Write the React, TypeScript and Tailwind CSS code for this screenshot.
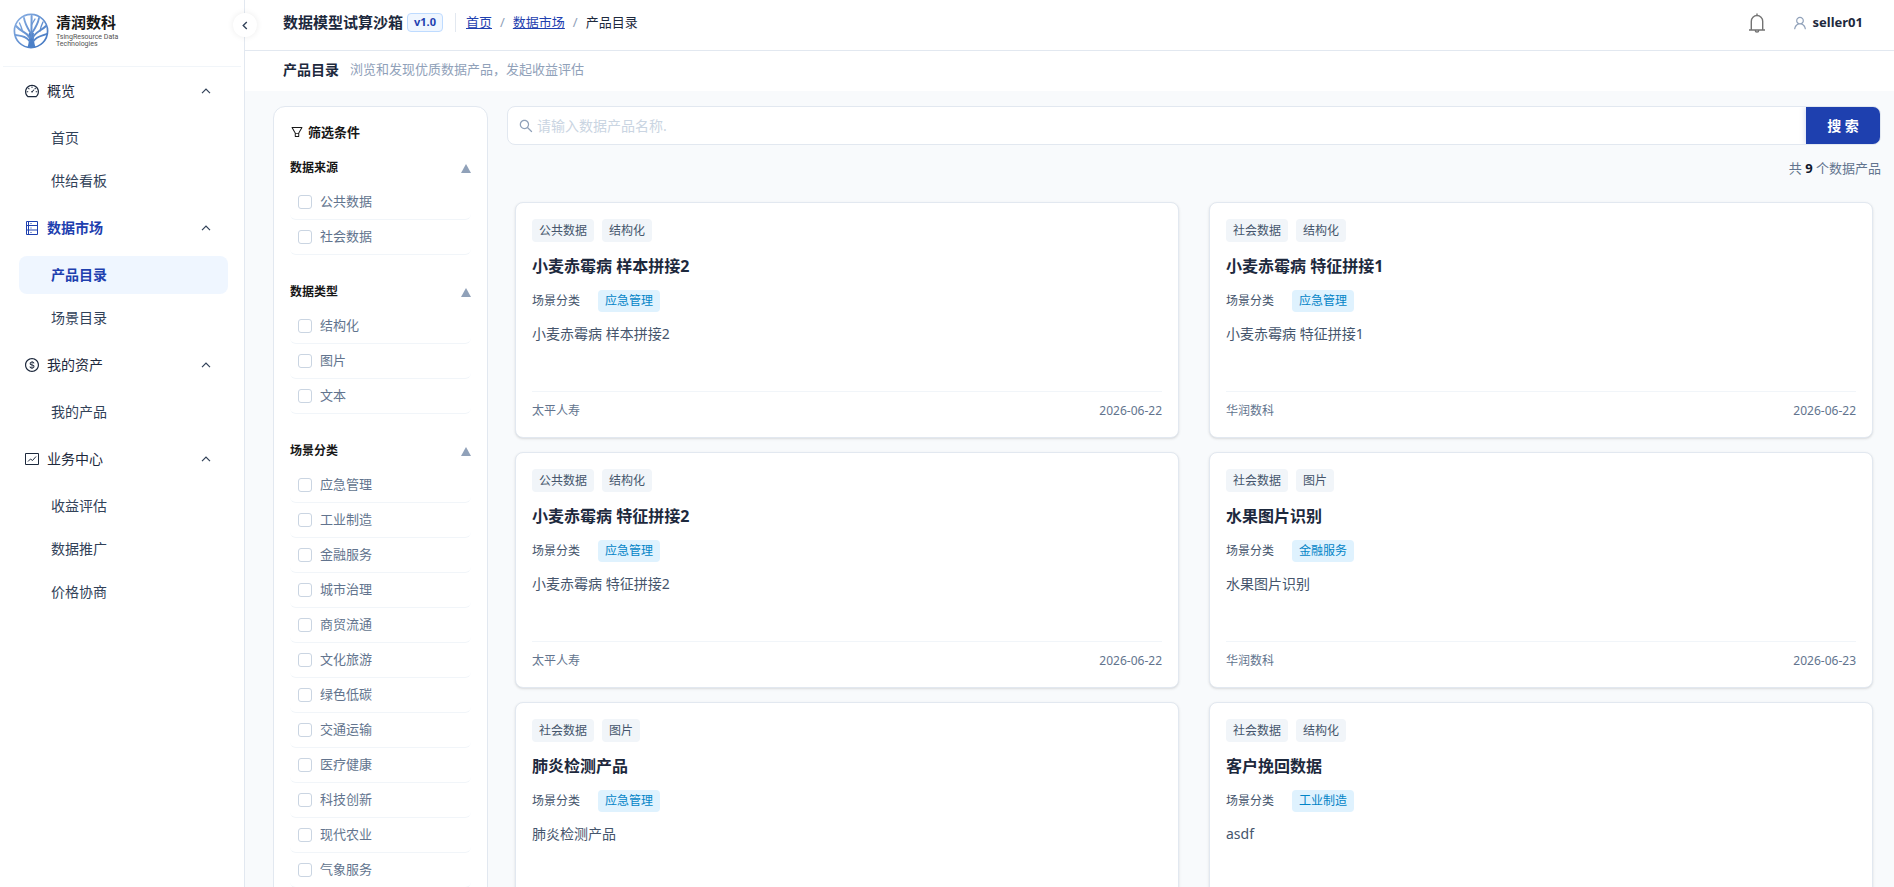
import { useState } from "react";
import {
  AiOutlineDashboard,
  AiOutlineDollar,
  AiOutlineFilter,
  AiOutlineSearch,
  AiOutlineUser,
} from "react-icons/ai";

const menuGroups = [
  { key: "overview", label: "概览", icon: "gauge", items: ["首页", "供给看板"] },
  { key: "market", label: "数据市场", icon: "book", items: ["产品目录", "场景目录"] },
  { key: "assets", label: "我的资产", icon: "dollar", items: ["我的产品"] },
  { key: "business", label: "业务中心", icon: "trend", items: ["收益评估", "数据推广", "价格协商"] },
];

const filterSections = [
  { title: "数据来源", options: ["公共数据", "社会数据"] },
  { title: "数据类型", options: ["结构化", "图片", "文本"] },
  {
    title: "场景分类",
    options: [
      "应急管理",
      "工业制造",
      "金融服务",
      "城市治理",
      "商贸流通",
      "文化旅游",
      "绿色低碳",
      "交通运输",
      "医疗健康",
      "科技创新",
      "现代农业",
      "气象服务",
    ],
  },
];

const products = [
  { tags: ["公共数据", "结构化"], title: "小麦赤霉病 样本拼接2", scene: "应急管理", desc: "小麦赤霉病 样本拼接2", owner: "太平人寿", date: "2026-06-22" },
  { tags: ["社会数据", "结构化"], title: "小麦赤霉病 特征拼接1", scene: "应急管理", desc: "小麦赤霉病 特征拼接1", owner: "华润数科", date: "2026-06-22" },
  { tags: ["公共数据", "结构化"], title: "小麦赤霉病 特征拼接2", scene: "应急管理", desc: "小麦赤霉病 特征拼接2", owner: "太平人寿", date: "2026-06-22" },
  { tags: ["社会数据", "图片"], title: "水果图片识别", scene: "金融服务", desc: "水果图片识别", owner: "华润数科", date: "2026-06-23" },
  { tags: ["社会数据", "图片"], title: "肺炎检测产品", scene: "应急管理", desc: "肺炎检测产品", owner: "太平人寿", date: "2026-06-22" },
  { tags: ["社会数据", "结构化"], title: "客户挽回数据", scene: "工业制造", desc: "asdf", owner: "华润数科", date: "2026-06-22" },
];

const TreeLogo = () => (
  <svg viewBox="0 0 36 36" className="size-9 shrink-0" fill="none" strokeLinecap="round">
    <defs>
      <linearGradient id="tree" x1="0" y1="0" x2="36" y2="36" gradientUnits="userSpaceOnUse">
        <stop offset="0" stopColor="#8fb4e6" />
        <stop offset="1" stopColor="#3a70bd" />
      </linearGradient>
    </defs>
    <circle cx="18" cy="18" r="16.6" stroke="url(#tree)" strokeWidth="1.7" />
    <path d="M15.800 20c.7 5 .2 9.500-1.300 14.500h8C21 29.500 20.400 25 20.900 20z" fill="#4c80c8" />
    <g stroke="url(#tree)">
      <path d="M18.400 24L18.600 3" strokeWidth="2" />
      <path d="M17 25C14 19 8 19 3 13M19.700 25C22 19 28 18 33 13" strokeWidth="2" />
      <path d="M17.500 20C14 14 12 11 11 5M19 20C23 14 25 11 26 5" strokeWidth="1.800" />
      <path d="M16.500 28C13 23 8 23 2.500 22M20.500 28C24 23 29 23 33.500 21" strokeWidth="1.800" />
      <path d="M9.500 18.500C9 16 8 13 6.500 10M27 18C27.500 15 28.500 12 30 9M18.400 12L22 6" strokeWidth="1.400" />
    </g>
  </svg>
);

const BookIcon = () => (
  <svg viewBox="0 0 16 16" className="size-4" fill="none" stroke="currentColor">
    <path d="M2.500 1.500h11v13h-11zM2.500 5.500h11M2.500 10h11M4.500 1.500v13M6.500 3.500h1M6.500 8h1M6.500 12.500h1" />
  </svg>
);

const TrendIcon = () => (
  <svg viewBox="0 0 16 16" className="size-4" fill="none" stroke="currentColor">
    <path d="M1.500 2.500h13v11h-13z" />
    <path d="M4 10.500l2.500-2.500 2 1.500L12 5.500" />
  </svg>
);

const BellIcon = () => (
  <svg viewBox="0 0 18 20" className="h-5 w-[18px]" fill="none" stroke="currentColor" strokeWidth="1.400">
    <path d="M9 .500v1.800M3.300 17V8.200a5.700 5.700 0 0 1 11.400 0V17M1 17h16M7.300 17.600a1.700 1.500 0 0 0 3.400 0" />
  </svg>
);

const Chevron = () => (
  <svg viewBox="0 0 10 6" className="h-[6px] w-[10px]" fill="none" stroke="currentColor" strokeWidth="1.200">
    <path d="M1 5.200L5 1l4 4.200" />
  </svg>
);

const MenuIcon = ({ name }: { name: string }) => {
  if (name === "gauge") return <AiOutlineDashboard className="size-4" />;
  if (name === "dollar") return <AiOutlineDollar className="size-4" />;
  if (name === "book") return <BookIcon />;
  return <TrendIcon />;
};

const Sidebar = ({ active, onSelect }: { active: string; onSelect: (item: string) => void }) => (
  <aside className="relative w-[245px] shrink-0 border-r border-slate-200 bg-white">
    <div className="mx-[3px] flex h-[67px] items-start gap-[7px] border-b border-slate-100 pt-[13px] pl-[10px]">
      <TreeLogo />
      <div>
        <div className="text-[15px] leading-[18px] font-bold text-neutral-900">清润数科</div>
        <div className="pt-[3px] font-[Roboto,sans-serif] text-[7px] leading-[7px] text-neutral-600">
          TsingResource Data
          <br />
          Technologies
        </div>
      </div>
    </div>

    <nav className="flex flex-col gap-[9px] pt-[5px] pr-4 pl-[19px]">
      {menuGroups.map((group) => {
        const current = group.items.includes(active);
        return (
          <div key={group.key}>
            <button
              type="button"
              className={`flex h-[38px] w-full items-center gap-[7px] pr-[17px] pl-[5px] text-sm ${
                current ? "font-bold text-[#1e40af]" : "text-slate-800"
              }`}
            >
              <MenuIcon name={group.icon} />
              {group.label}
              <span className="ml-auto text-slate-700">
                <Chevron />
              </span>
            </button>
            <div className="mt-[9px] flex flex-col gap-[5px]">
              {group.items.map((item) => (
                <a
                  key={item}
                  href="#"
                  onClick={(e) => {
                    e.preventDefault();
                    onSelect(item);
                  }}
                  className={`flex h-[38px] items-center rounded-lg pl-8 text-sm ${
                    item === active ? "bg-blue-50 font-bold text-[#1e40af]" : "text-slate-700"
                  }`}
                >
                  {item}
                </a>
              ))}
            </div>
          </div>
        );
      })}
    </nav>

    {/* Collapse handle sits on the border */}
    <button
      type="button"
      aria-label="收起"
      className="absolute top-[13px] -right-[13px] z-10 flex size-6 items-center justify-center rounded-full bg-white text-slate-700 shadow-[0_0_6px_rgba(0,0,0,0.08)]"
    >
      <svg viewBox="0 0 6 10" className="h-[9px] w-[6px]" fill="none" stroke="currentColor" strokeWidth="1.500">
        <path d="M5 1L1 5l4 4" />
      </svg>
    </button>
  </aside>
);

const Header = () => (
  <header className="flex h-[51px] shrink-0 items-center border-b border-slate-200 bg-white pr-[31px] pb-[5px] pl-[38px]">
    <h1 className="text-[15px] font-bold text-slate-800">数据模型试算沙箱</h1>
    <span className="ml-1 flex h-[19px] items-center rounded border border-blue-200 bg-blue-50 px-[6px] text-[11px] font-bold text-[#1e40af]">
      v1.0
    </span>
    <span className="ml-3 h-[19px] w-px bg-slate-200" />
    <nav className="ml-[10px] flex items-center gap-2 text-[13px]">
      <a href="#" className="text-[#1e40af] underline">首页</a>
      <span className="text-slate-400">/</span>
      <a href="#" className="text-[#1e40af] underline">数据市场</a>
      <span className="text-slate-400">/</span>
      <span className="text-slate-800">产品目录</span>
    </nav>
    <button type="button" aria-label="通知" className="ml-auto text-neutral-500">
      <BellIcon />
    </button>
    <button type="button" className="ml-[26px] flex items-center gap-[5px] text-[13px] font-bold text-slate-800">
      <AiOutlineUser className="size-4 text-slate-400" />
      seller01
    </button>
  </header>
);

const FilterPanel = () => (
  <aside className="w-[215px] shrink-0 self-start rounded-xl border border-slate-200 bg-white px-4 pt-[15px] pb-4">
    <h3 className="flex items-center gap-1 text-[13px] leading-5 font-bold text-neutral-900">
      <AiOutlineFilter className="size-[14px]" />
      筛选条件
    </h3>
    <div className="mt-[17px] flex flex-col gap-7">
      {filterSections.map((section) => (
        <fieldset key={section.title}>
          <legend className="flex w-full items-center justify-between text-xs leading-[18px] font-bold text-neutral-900">
            {section.title}
            <svg viewBox="0 0 10 9" className="h-[9px] w-[10px] fill-slate-400">
              <path d="M5 0l5 9H0z" />
            </svg>
          </legend>
          <div className="pt-2">
            {section.options.map((option) => (
              <label
                key={option}
                className="flex h-[35px] items-center gap-2 rounded-md border-b border-slate-100 pl-2 text-[13px] text-slate-500"
              >
                <input type="checkbox" className="size-[14px] appearance-none rounded-[3px] border border-slate-300 bg-white checked:bg-[#1e40af]" />
                {option}
              </label>
            ))}
          </div>
        </fieldset>
      ))}
    </div>
  </aside>
);

const ProductCard = ({ product }: { product: (typeof products)[number] }) => (
  <article className="flex h-[236px] flex-col rounded-lg border border-slate-200 bg-white px-4 pt-4 pb-[17px] shadow-sm">
    <div className="flex gap-2">
      {product.tags.map((tag) => (
        <span key={tag} className="flex h-[23px] items-center rounded bg-slate-100 px-[7px] text-xs text-slate-600">
          {tag}
        </span>
      ))}
    </div>
    <h2 className="mt-3 text-base leading-6 font-bold text-slate-800">{product.title}</h2>
    <div className="mt-3 flex h-[22px] items-center text-xs text-slate-600">
      场景分类
      <span className="ml-[18px] flex h-[22px] items-center rounded bg-sky-100 px-[7px] text-[#0284c7]">{product.scene}</span>
    </div>
    <p className="mt-[11px] text-sm leading-[22px] text-slate-600">{product.desc}</p>
    <div className="mt-auto flex justify-between border-t border-slate-100 pt-[10px] text-xs leading-[18px] text-slate-500">
      <span>{product.owner}</span>
      <span>{product.date}</span>
    </div>
  </article>
);

const App = () => {
  const [active, setActive] = useState("产品目录");
  const [keyword, setKeyword] = useState("");

  return (
    <div className="flex h-screen overflow-hidden bg-slate-50 font-['Noto_Sans','Noto_Sans_CJK_SC',sans-serif]">
      <Sidebar active={active} onSelect={setActive} />
      <div className="flex min-w-0 flex-1 flex-col">
        <Header />
        <div className="flex h-10 shrink-0 items-center gap-[11px] bg-white pb-[3px] pl-[38px]">
          <h2 className="text-sm font-bold text-slate-800">产品目录</h2>
          <p className="text-[13px] text-slate-400">浏览和发现优质数据产品，发起收益评估</p>
        </div>

        <main className="flex min-h-0 flex-1 gap-[19px] overflow-y-auto pt-[15px] pr-[13px] pl-7 [scrollbar-width:none]">
          <FilterPanel />
          <div className="min-w-0 flex-1">
            <form className="flex h-[39px] overflow-hidden rounded-lg border border-slate-200 bg-white" onSubmit={(e) => e.preventDefault()}>
              <label className="flex flex-1 items-center gap-[3px] pl-[10px]">
                <AiOutlineSearch className="size-4 text-slate-400" />
                <input
                  type="text"
                  aria-label="搜索"
                  value={keyword}
                  onChange={(e) => setKeyword(e.target.value)}
                  placeholder="请输入数据产品名称."
                  className="h-full flex-1 text-sm text-slate-800 outline-none placeholder:text-slate-300"
                />
              </label>
              <button type="submit" className="w-[74px] bg-[#1e40af] text-sm font-bold text-white shadow-[0_0_6px_rgba(30,64,175,0.25)]">
                搜 索
              </button>
            </form>
            <p className="mt-[13px] text-right text-[13px] leading-5 text-slate-500">
              共 <b className="text-slate-900">9</b> 个数据产品
            </p>
            <div className="mt-6 grid grid-cols-2 gap-x-[30px] gap-y-[14px] px-2 pb-4">
              {products.map((product) => (
                <ProductCard key={product.title} product={product} />
              ))}
            </div>
          </div>
        </main>
      </div>
    </div>
  );
};

export default App;
